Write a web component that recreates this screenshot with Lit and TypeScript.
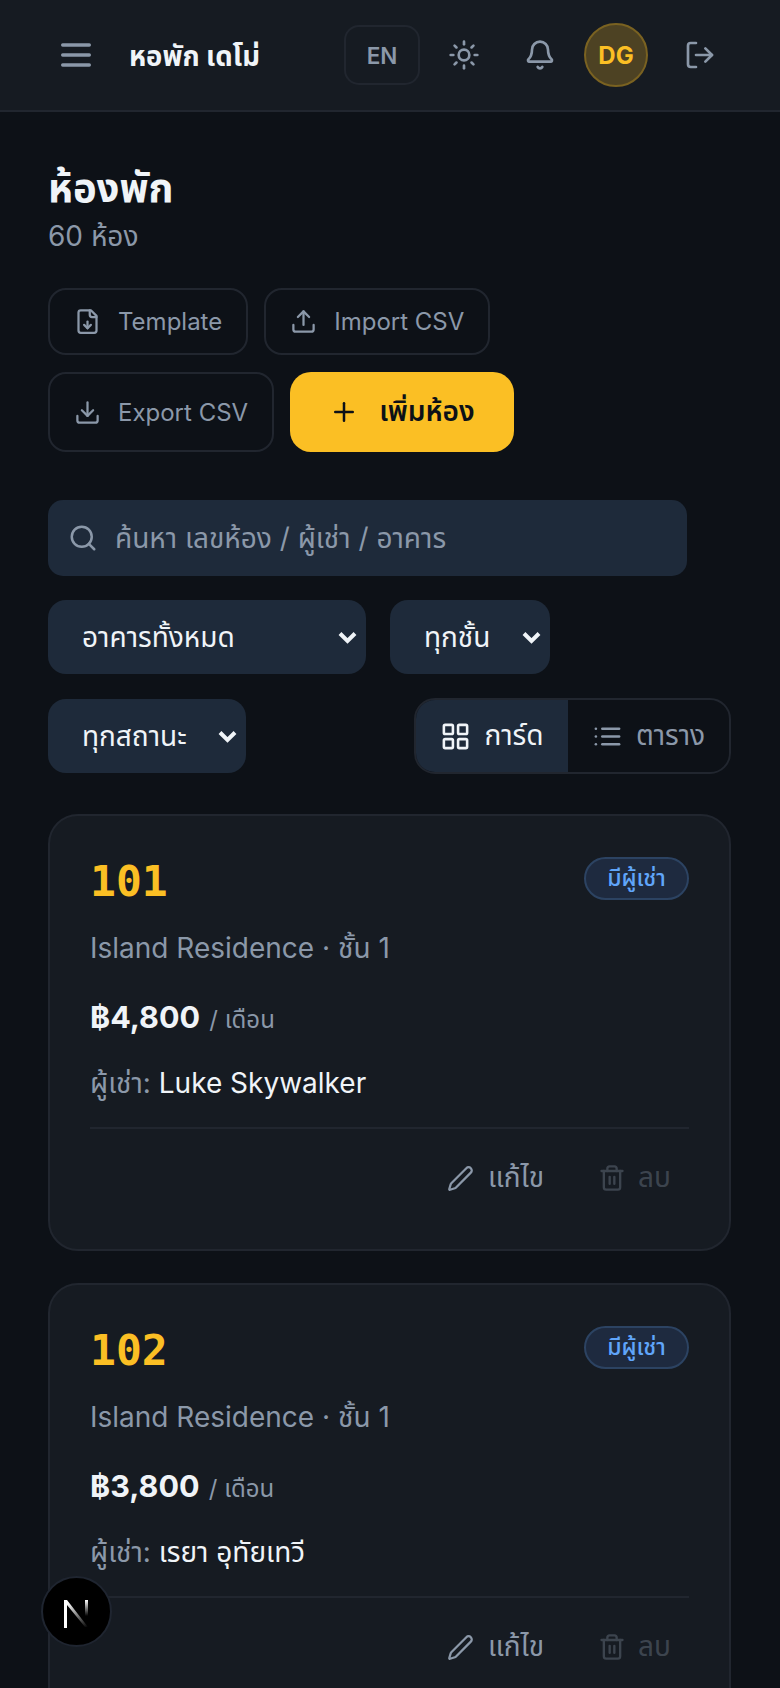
import { LitElement, html, css, svg } from "lit";
import { customElement } from "lit/decorators.js";

const icon = (size: number, body: unknown, sw = 2) => html`<svg class="ic" width=${size} height=${size} viewBox="0 0 24 24" fill="none" stroke="currentColor" stroke-width=${sw} stroke-linecap="round" stroke-linejoin="round">${body}</svg>`;

const I = {
  menu: svg`<path d="M4 6h16"/><path d="M4 12h16"/><path d="M4 18h16"/>`,
  sun: svg`<circle cx="12" cy="12" r="4"/><path d="M12 2v2"/><path d="M12 20v2"/><path d="m4.93 4.93 1.41 1.41"/><path d="m17.66 17.66 1.41 1.41"/><path d="M2 12h2"/><path d="M20 12h2"/><path d="m6.34 17.66-1.41 1.41"/><path d="m19.07 4.93-1.41 1.41"/>`,
  bell: svg`<path d="M10.268 21a2 2 0 0 0 3.464 0"/><path d="M3.262 15.326A1 1 0 0 0 4 17h16a1 1 0 0 0 .74-1.673C19.41 13.956 18 12.499 18 8A6 6 0 0 0 6 8c0 4.499-1.411 5.956-2.738 7.326"/>`,
  logout: svg`<path d="m16 17 5-5-5-5"/><path d="M21 12H9"/><path d="M9 21H5a2 2 0 0 1-2-2V5a2 2 0 0 1 2-2h4"/>`,
  fileDown: svg`<path d="M15 2H6a2 2 0 0 0-2 2v16a2 2 0 0 0 2 2h12a2 2 0 0 0 2-2V7Z"/><path d="M14 2v4a2 2 0 0 0 2 2h4"/><path d="M12 18v-6"/><path d="m9 15 3 3 3-3"/>`,
  upload: svg`<path d="M12 3v12"/><path d="m17 8-5-5-5 5"/><path d="M21 15v4a2 2 0 0 1-2 2H5a2 2 0 0 1-2-2v-4"/>`,
  download: svg`<path d="M12 15V3"/><path d="M21 15v4a2 2 0 0 1-2 2H5a2 2 0 0 1-2-2v-4"/><path d="m7 10 5 5 5-5"/>`,
  plus: svg`<path d="M5 12h14"/><path d="M12 5v14"/>`,
  search: svg`<path d="m21 21-4.34-4.34"/><circle cx="11" cy="11" r="8"/>`,
  grid: svg`<rect width="7" height="7" x="3" y="3" rx="1"/><rect width="7" height="7" x="14" y="3" rx="1"/><rect width="7" height="7" x="14" y="14" rx="1"/><rect width="7" height="7" x="3" y="14" rx="1"/>`,
  list: svg`<path d="M3 6h.01"/><path d="M3 12h.01"/><path d="M3 18h.01"/><path d="M8 6h13"/><path d="M8 12h13"/><path d="M8 18h13"/>`,
  pencil: svg`<path d="M21.174 6.812a1 1 0 0 0-3.986-3.987L3.842 16.174a2 2 0 0 0-.5.83l-1.321 4.352a.5.5 0 0 0 .623.622l4.353-1.32a2 2 0 0 0 .83-.497z"/>`,
  trash: svg`<path d="M10 11v6"/><path d="M14 11v6"/><path d="M19 6v14a2 2 0 0 1-2 2H7a2 2 0 0 1-2-2V6"/><path d="M3 6h18"/><path d="M8 6V4a2 2 0 0 1 2-2h4a2 2 0 0 1 2 2v2"/>`,
};

const rooms = [
  { no: "101", floor: 1, price: "฿4,800", tenant: "Luke Skywalker" },
  { no: "102", floor: 1, price: "฿3,800", tenant: "เรยา อุทัยเทวี" },
];

const chevron = `url("data:image/svg+xml,%3Csvg xmlns='http://www.w3.org/2000/svg' width='19' height='13' viewBox='0 0 19 13' fill='none' stroke='%23f0f4f8' stroke-width='4'%3E%3Cpath d='M2 2.5l7.5 7.5L17 2.5'/%3E%3C/svg%3E")`;

@customElement("app-root")
export class AppRoot extends LitElement {
  static styles = css`
    :host { display: block; height: 100vh; overflow: hidden; background: #0d1117; color: #f0f4f8; font-family: Inter, "Noto Sans Thai", sans-serif; }
    * { box-sizing: border-box; }
    .ic { display: block; flex: none; }
    header { height: 112px; background: #161b22; border-bottom: 2px solid #21262f; display: flex; align-items: center; gap: 12px; padding: 0 48px 0 56px; }
    .burger { color: #8b98a9; margin-right: 21px; }
    .brand { font-size: 27.5px; font-weight: 700; color: #f0f4f8; flex: 1; white-space: nowrap; padding-top: 4px; }
    .lang { width: 76px; height: 60px; border: 2px solid #21262f; border-radius: 15px; display: flex; align-items: center; justify-content: center; color: #8b98a9; font-size: 22.5px; font-weight: 600; }
    .hbtn { color: #8b98a9; width: 64px; display: flex; justify-content: center; }
    .avatar { width: 64px; height: 64px; border-radius: 50%; background: #4d4223; border: 2px solid #7a6221; color: #fbbf24; display: flex; align-items: center; justify-content: center; font-size: 24px; font-weight: 700; flex: none; }
    .out { margin-left: 8px; }
    main { padding: 49px 48px 0; }
    h1 { margin: 0; font-size: 40px; line-height: 54px; font-weight: 700; color: #f0f4f8; }
    .count { margin-top: 1px; font-size: 28px; line-height: 40px; color: #8b98a9; }
    .tools { display: flex; flex-wrap: wrap; gap: 17px 16px; margin-top: 32px; width: 500px; }
    .tool { display: flex; align-items: center; gap: 17px; height: 67px; padding: 0 24px; border: 2px solid #21262f; border-radius: 18px; color: #8b98a9; font-size: 24px; white-space: nowrap; }
    .tool.tall { height: 80px; }
    .add { display: flex; align-items: center; gap: 20px; height: 80px; padding: 0 39px; background: #fbbf24; border-radius: 21px; color: #0d1117; font-size: 28px; font-weight: 600; white-space: nowrap; }
    .search { display: flex; align-items: center; gap: 17px; width: 639px; height: 76px; margin-top: 48px; padding: 0 20px; background: #1e2a3a; border-radius: 15px; color: #8b98a9; }
    .search input { flex: 1; min-width: 0; height: 100%; background: none; border: 0; outline: 0; font: inherit; font-size: 28px; color: #f0f4f8; padding: 0; }
    .search input::placeholder { color: #8b98a9; opacity: 1; }
    .filters { display: flex; align-items: center; gap: 24px; margin-top: 24px; }
    select { appearance: none; height: 74px; border: 0; border-radius: 18px; background: #1e2a3a ${css([chevron] as unknown as TemplateStringsArray)} no-repeat right 9px center; color: #f0f4f8; font-family: inherit; font-size: 28px; padding: 0 30px 0 34px; outline: 0; }
    .s1 { width: 318px; }
    .s2 { width: 160px; }
    .s3 { width: 198px; }
    .row3 { display: flex; align-items: center; justify-content: space-between; width: 683px; margin-top: 24px; }
    .toggle { display: flex; width: 317px; height: 76px; border: 2px solid #21262f; border-radius: 21px; overflow: hidden; }
    .seg { display: flex; align-items: center; justify-content: center; gap: 13px; font-size: 28px; color: #8b98a9; }
    .seg.on { width: 152px; background: #1e2a3a; color: #f0f4f8; }
    .seg.off { flex: 1; }
    .cards { display: flex; flex-direction: column; gap: 32px; margin-top: 40px; }
    .card { width: 683px; height: 437px; background: #161b22; border: 2px solid #21262f; border-radius: 30px; padding: 41px 40px; }
    .top { display: flex; justify-content: space-between; align-items: flex-start; }
    .no { font-family: "DejaVu Sans Mono", monospace; font-size: 43px; font-weight: 700; line-height: 50px; color: #fbbf24; margin-top: -1px; height: 53px; }
    .badge { width: 105px; height: 43px; display: flex; align-items: center; justify-content: center; background: #1e2a3f; border: 2px solid #2c4362; border-radius: 999px; color: #60a5fa; font-size: 23px; font-weight: 500; white-space: nowrap; }
    .sub { margin-top: 19px; font-size: 28px; line-height: 40px; color: #8b98a9; white-space: nowrap; }
    .price { margin-top: 24px; line-height: 50px; font-size: 30.5px; font-weight: 700; color: #f0f4f8; }
    .price span { font-size: 24px; font-weight: 400; color: #8b98a9; margin-left: 2px; }
    .ten { margin-top: 18px; font-size: 28px; line-height: 40px; color: #8b98a9; }
    .ten b { font-weight: 400; color: #f0f4f8; }
    .acts { margin-top: 24px; border-top: 2px solid #21262f; display: flex; justify-content: flex-end; gap: 54px; padding: 32px 18px 0 0; font-size: 28px; }
    .act { display: flex; align-items: center; gap: 14px; color: #8b98a9; height: 34px; }
    .act.del { gap: 12px; opacity: .33; }
    .next { position: fixed; left: 41px; top: 1576px; width: 71px; height: 71px; border-radius: 50%; background: #000; border: 2px solid #1f2530; display: flex; align-items: center; justify-content: center; }
  `;

  render() {
    return html`
      <header>
        <span class="burger">${icon(40, I.menu)}</span>
        <span class="brand">หอพัก เดโม่</span>
        <span class="lang">EN</span>
        <span class="hbtn">${icon(32, I.sun)}</span>
        <span class="hbtn">${icon(32, I.bell)}</span>
        <span class="avatar">DG</span>
        <span class="hbtn out">${icon(32, I.logout)}</span>
      </header>
      <main>
        <h1>ห้องพัก</h1>
        <div class="count">60 ห้อง</div>
        <div class="tools">
          <div class="tool">${icon(27, I.fileDown)}Template</div>
          <div class="tool">${icon(27, I.upload)}Import CSV</div>
          <div class="tool tall">${icon(27, I.download)}Export CSV</div>
          <div class="add">${icon(30, I.plus)}เพิ่มห้อง</div>
        </div>
        <label class="search">${icon(30, I.search)}<input placeholder="ค้นหา เลขห้อง / ผู้เช่า / อาคาร" /></label>
        <div class="filters">
          <select class="s1"><option>อาคารทั้งหมด</option></select>
          <select class="s2"><option>ทุกชั้น</option></select>
        </div>
        <div class="row3">
          <select class="s3"><option>ทุกสถานะ</option></select>
          <div class="toggle">
            <div class="seg on">${icon(31, I.grid)}การ์ด</div>
            <div class="seg off">${icon(31, I.list)}ตาราง</div>
          </div>
        </div>
        <div class="cards">
          ${rooms.map((r) => html`
            <article class="card">
              <div class="top"><div class="no">${r.no}</div><div class="badge">มีผู้เช่า</div></div>
              <div class="sub">Island Residence · ชั้น ${r.floor}</div>
              <div class="price">${r.price} <span>/ เดือน</span></div>
              <div class="ten">ผู้เช่า: <b>${r.tenant}</b></div>
              <div class="acts">
                <div class="act">${icon(27, I.pencil)}แก้ไข</div>
                <div class="act del">${icon(28, I.trash)}ลบ</div>
              </div>
            </article>`)}
        </div>
      </main>
      <div class="next">
        <svg width="36" height="36" viewBox="0 0 36 36" fill="none">
          <defs>
            <linearGradient id="a" x1="10" y1="8" x2="30" y2="32" gradientUnits="userSpaceOnUse"><stop offset="0" stop-color="#fff"/><stop offset="1" stop-color="#fff" stop-opacity="0"/></linearGradient>
            <linearGradient id="b" x1="27" y1="6" x2="27" y2="22" gradientUnits="userSpaceOnUse"><stop offset="0" stop-color="#fff"/><stop offset="1" stop-color="#fff" stop-opacity="0"/></linearGradient>
          </defs>
          <path d="M5 6h3l21 27h-3L8 11v22H5z" fill="url(#a)"/>
          <rect x="5" y="6" width="3" height="28" fill="#fff"/>
          <rect x="26" y="6" width="3" height="16" fill="url(#b)"/>
        </svg>
      </div>
    `;
  }
}
